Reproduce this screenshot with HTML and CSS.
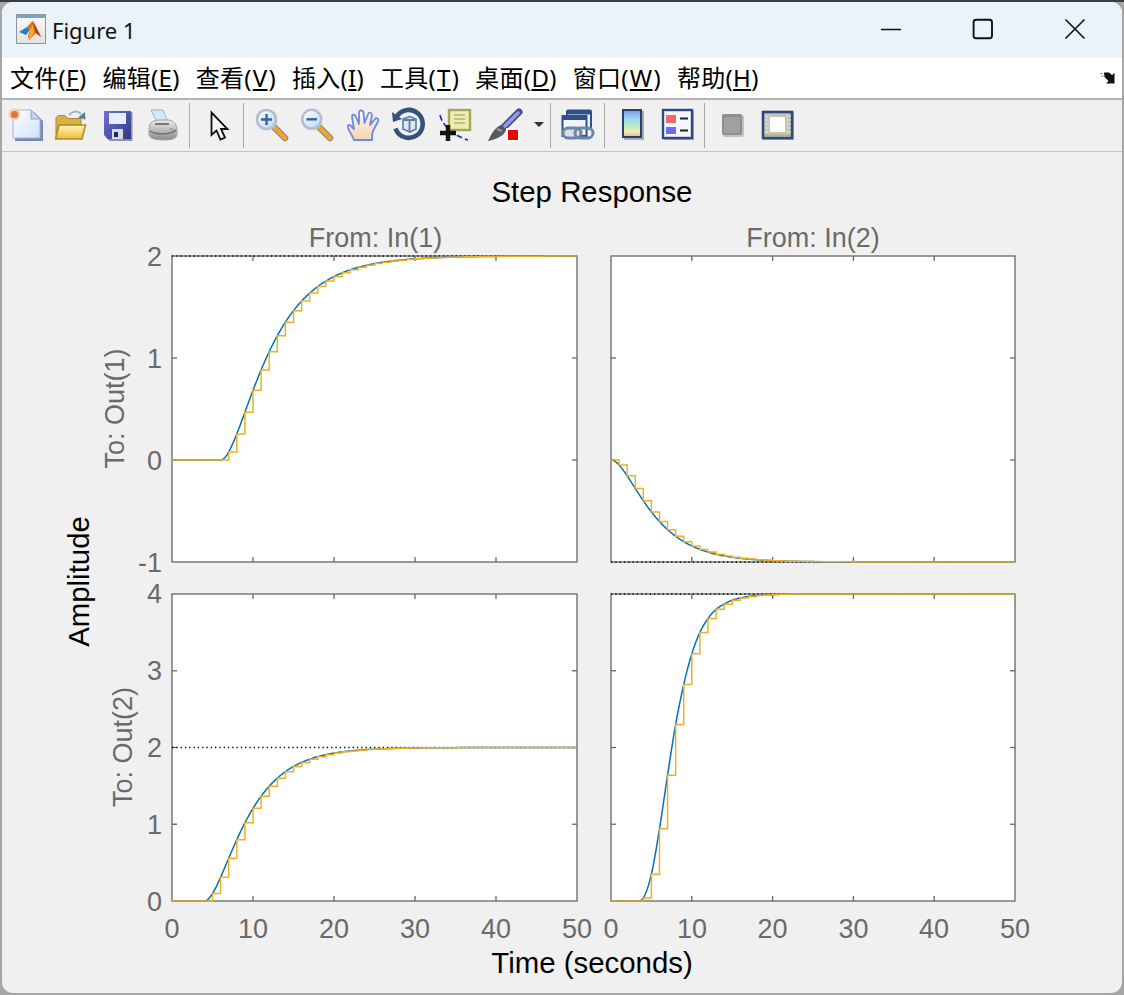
FILE: index.html
```html
<!DOCTYPE html>
<html lang="zh">
<head>
<meta charset="utf-8">
<title>Figure 1</title>
<link rel="stylesheet" href="styles.css">
</head>
<body>
<div class="window">
  <header class="titlebar">
    <svg class="app-icon" viewBox="0 0 30 30" width="30" height="30">
      <defs><linearGradient id="wb" x1="0" y1="0" x2="0" y2="1"><stop offset="0" stop-color="#fafafa"/><stop offset="1" stop-color="#e2e2e2"/></linearGradient></defs>
      <rect x="0.5" y="0.5" width="29" height="29" fill="url(#wb)" stroke="#8b959e"/>
      <rect x="1" y="1" width="28" height="3" fill="#76a3c6"/>
      <path d="M3 18 L11 13 L14 16 L10 21 Z" fill="#2f7fc0"/>
      <path d="M11 13 C13 11 15 8 17 7 L25 23 L20 19 L13 26 L12 22 L14 16 Z" fill="#e2701f"/>
      <path d="M17 7 L25 23 L20 19 L18 12 Z" fill="#b5341a"/>
      <path d="M14 16 L17 11 L18 19 L13 26 Z" fill="#f2b02a"/>
    </svg>
    <span class="title-text">Figure 1</span>
    <div class="win-controls">
      <button class="win-btn"><svg viewBox="0 0 24 24" width="24" height="24"><path d="M2 12.5H22" stroke="#111" stroke-width="1.6"/></svg></button>
      <button class="win-btn"><svg viewBox="0 0 24 24" width="24" height="24"><rect x="2.600" y="2.800" width="18.400" height="18.400" rx="2.500" fill="none" stroke="#111" stroke-width="1.900"/></svg></button>
      <button class="win-btn"><svg viewBox="0 0 24 24" width="24" height="24"><path d="M2.500 2.500L21.500 21.500M21.500 2.500L2.500 21.500" stroke="#111" stroke-width="1.600"/></svg></button>
    </div>
  </header>

  <nav class="menubar">
    <span class="menu-item">文件(<u>F</u>)</span>
    <span class="menu-item">编辑(<u>E</u>)</span>
    <span class="menu-item wide">查看(<u>V</u>)</span>
    <span class="menu-item">插入(<u>I</u>)</span>
    <span class="menu-item wide">工具(<u>T</u>)</span>
    <span class="menu-item">桌面(<u>D</u>)</span>
    <span class="menu-item wide">窗口(<u>W</u>)</span>
    <span class="menu-item">帮助(<u>H</u>)</span>
    <svg class="dock-arrow" viewBox="0 0 16 12" width="16" height="12">
      <path d="M2 .5H7L10 3L12.500 1V11.500H4L6.500 9L2.500 5Z" fill="#111" transform="translate(2 0)"/>
      <path d="M0 1.500H2.500M1 4H3.500" stroke="#888" stroke-width="1"/>
    </svg>
  </nav>

  <div class="toolbar">
    <div class="tb-group g1">
      <svg class="tool" viewBox="0 0 46 36">
        <defs>
          <linearGradient id="pg" x1="0" y1="0" x2="1" y2="1"><stop offset="0" stop-color="#ffffff"/><stop offset="1" stop-color="#cfe2f8"/></linearGradient>
          <linearGradient id="fg" x1="0" y1="0" x2="0" y2="1"><stop offset="0" stop-color="#fff6b0"/><stop offset="1" stop-color="#eebc3e"/></linearGradient>
          <linearGradient id="sv" x1="0" y1="0" x2="1" y2="1"><stop offset="0" stop-color="#6f72d8"/><stop offset="1" stop-color="#2f3a80"/></linearGradient>
          <linearGradient id="pr" x1="0" y1="0" x2="0" y2="1"><stop offset="0" stop-color="#ececec"/><stop offset="1" stop-color="#8a8a8a"/></linearGradient>
          <linearGradient id="hd" x1="0" y1="0" x2="0" y2="1"><stop offset="0" stop-color="#fff8f0"/><stop offset="1" stop-color="#f6d2b0"/></linearGradient>
          <linearGradient id="cb" x1="0" y1="0" x2="0" y2="1"><stop offset="0" stop-color="#7f8fea"/><stop offset=".35" stop-color="#9fdcec"/><stop offset=".6" stop-color="#c0eac0"/><stop offset=".82" stop-color="#f4e8b0"/><stop offset="1" stop-color="#f0b088"/></linearGradient>
          <linearGradient id="lens" x1="0" y1="0" x2="1" y2="1"><stop offset="0" stop-color="#ffffff"/><stop offset="1" stop-color="#b4dcef"/></linearGradient>
        </defs>
        <path d="M13 5H32L41 14V34H13Z" fill="#7d88ae"/>
        <path d="M11 3H29L38 12V31H11Z" fill="url(#pg)" stroke="#9ab4e0"/>
        <path d="M29 3L38 12H29Z" fill="#c4d4ee" stroke="#8ea6d0"/>
        <circle cx="12.500" cy="7.500" r="6" fill="#f6cdb0"/>
        <circle cx="12.500" cy="7.500" r="3.600" fill="#e8743c"/>
      </svg>
      <svg class="tool" viewBox="0 0 46 36">
        <path d="M8 31V11L10 8.500H17L20 11.500H33V18H12Z" fill="#d9ae44" stroke="#a98a2c"/>
        <path d="M7.500 32L11 18H37.500L34 32Z" fill="url(#fg)" stroke="#b08c24" stroke-width="1.600"/>
        <path d="M21 8C25 3.500 30 3.500 33 7" fill="none" stroke="#a4b6c6" stroke-width="2.200"/>
        <path d="M37 5L37.500 12.500L30 10.500Z" fill="#5b7ea2"/>
      </svg>
      <svg class="tool" viewBox="0 0 46 36">
        <path d="M10 4H37V33H14L10 29Z" fill="#8b93ae" transform="translate(1.500 1)"/>
        <path d="M10 4H37V32H14L10 28Z" fill="url(#sv)"/>
        <rect x="15" y="6" width="17" height="11" fill="#e6eefc"/>
        <rect x="18" y="22" width="11" height="10" fill="#d9d9e4"/>
        <rect x="20" y="25" width="4" height="5" fill="#222a55"/>
      </svg>
      <svg class="tool" viewBox="0 0 46 36">
        <path d="M11 3H23L28 15H17Z" fill="#cfe8fa" stroke="#9cb2c2"/>
        <path d="M9 22C9 15 14 13 20 13H28C33 13 37 17 37 23V27C37 31 33 33 24 33C14 33 9 31 9 27Z" fill="url(#pr)" stroke="#a0a0a0"/>
        <path d="M10 24C16 28 30 28 36 23" fill="none" stroke="#6c6c6c" stroke-width="1.500"/>
        <path d="M15 17H29" stroke="#777" stroke-width="2"/>
        <rect x="30" y="21" width="3" height="2" fill="#6fbe7a"/>
      </svg>
    </div>
    <div class="tb-group g2">
      <svg class="tool" viewBox="0 0 46 36">
        <path d="M14.500 5.500V28L19.500 23.500L23.500 32.500L28 30.500L24 22H30.500Z" fill="#f5f5f5" stroke="#111" stroke-width="1.800"/>
      </svg>
    </div>
    <div class="tb-group g3">
      <svg class="tool" viewBox="0 0 46 36">
        <path d="M27 20L38 31" stroke="#8d8268" stroke-width="6.500" stroke-linecap="round"/>
        <path d="M27 20L38 31" stroke="#eda53a" stroke-width="4.500" stroke-linecap="round"/>
        <circle cx="19.500" cy="12.500" r="9.500" fill="url(#lens)" stroke="#b6bed6" stroke-width="2.600"/>
        <path d="M14 12.500H25M19.500 7V18" stroke="#3a5fa6" stroke-width="2.400"/>
      </svg>
      <svg class="tool" viewBox="0 0 46 36">
        <path d="M26 20L37 31" stroke="#8d8268" stroke-width="6.500" stroke-linecap="round"/>
        <path d="M26 20L37 31" stroke="#eda53a" stroke-width="4.500" stroke-linecap="round"/>
        <circle cx="18.700" cy="12.300" r="9.500" fill="url(#lens)" stroke="#b6bed6" stroke-width="2.600"/>
        <path d="M13.500 12.300H24" stroke="#3a5fa6" stroke-width="2.400"/>
      </svg>
      <svg class="tool" viewBox="0 0 46 36">
        <path d="M15 33C13 28 11 26 9 21C8 18 10 17 12 19L15 22L13 10C13 7 16 7 17 10L20 17L20 6C20 2.500 24 2.500 24.500 6L25.500 16L29 7.500C30 4.500 33 5.500 33 8.500L31 18L36 12C38 10 40 12 39 14.500L34 24C33 27 33 30 33 33Z" fill="url(#hd)" stroke="#6a8ce0" stroke-width="1.800" stroke-linejoin="round"/>
      </svg>
      <svg class="tool" viewBox="0 0 46 36">
        <path d="M11 11A14 14 0 1 1 10.500 21.500" fill="none" stroke="#35527c" stroke-width="4.600"/>
        <path d="M7 5L8 15L17 12Z" fill="#35527c"/>
        <path d="M18 12L25 9.500L31 12V22L25 25L18 22Z" fill="#dfe7f0" stroke="#5a7aa2" stroke-width="1.600"/>
        <path d="M19 13H30M24.500 13V24" stroke="#5a7aa2" stroke-width="1.800"/>
      </svg>
      <svg class="tool" viewBox="0 0 46 36">
        <path d="M9 8C11 17 20 28 37 33" fill="none" stroke="#2222dd" stroke-width="1.600" stroke-dasharray="6 3"/>
        <rect x="18" y="3" width="21" height="20" fill="#eeecb0" stroke="#a8a45e" stroke-width="2.400"/>
        <path d="M23 8H34M23 12H34M23 16H34" stroke="#b4b178" stroke-width="1.600"/>
        <path d="M17 18V34M9 26H25" stroke="#111" stroke-width="4.400"/>
      </svg>
      <svg class="tool" viewBox="0 0 46 36">
        <path d="M27 20L42 5" stroke="#46518c" stroke-width="7" stroke-linecap="round"/>
        <path d="M28 19L41 6" stroke="#8f9ce6" stroke-width="3.500" stroke-linecap="round"/>
        <path d="M24 18L29 23C27 29 20 32 11 34C14 28 17 21 24 18Z" fill="#55585c"/>
        <path d="M20 22L25 24" stroke="#999" stroke-width="2"/>
        <rect x="29" y="21" width="14" height="14" fill="#fff"/>
        <rect x="31" y="23" width="10" height="10" fill="#f00000"/>
      </svg>
      <svg class="tool tool-small" viewBox="0 0 24 36"><path d="M11 15H21L16 20Z" fill="#333"/></svg>
    </div>
    <div class="tb-group g4">
      <svg class="tool" viewBox="0 0 46 36">
        <rect x="13" y="3.500" width="24" height="18" rx="1" fill="#eef2f8" stroke="#2f5088" stroke-width="2"/>
        <rect x="13" y="3.500" width="24" height="4" fill="#2f5088"/>
        <rect x="8.500" y="9" width="24" height="20" fill="#f2f5fa" stroke="#2f5088" stroke-width="2"/>
        <rect x="8.500" y="9" width="24" height="4" fill="#2f5088"/>
        <rect x="9" y="21" width="18" height="10" rx="5" fill="#d8e0ea" stroke="#6a86a8" stroke-width="3"/>
        <rect x="21" y="21" width="18" height="10" rx="5" fill="none" stroke="#6a86a8" stroke-width="3"/>
      </svg>
    </div>
    <div class="tb-group g5">
      <svg class="tool" viewBox="0 0 46 36">
        <rect x="15" y="4" width="20" height="29" fill="#a8aab8"/>
        <rect x="14" y="3" width="18" height="27" fill="url(#cb)" stroke="#2a3f70" stroke-width="2"/>
      </svg>
      <svg class="tool" viewBox="0 0 46 36">
        <rect x="9" y="4" width="30" height="29" fill="#a8aab8"/>
        <rect x="8" y="3" width="29" height="28" fill="#f4f6fb" stroke="#2a4a80" stroke-width="2.400"/>
        <rect x="11" y="8" width="10" height="8" fill="#ee6a6a"/>
        <rect x="11" y="20" width="10" height="7" fill="#6b6bee"/>
        <path d="M25 11.500H33M25 23.500H33" stroke="#222" stroke-width="2"/>
      </svg>
    </div>
    <div class="tb-group g6">
      <svg class="tool" viewBox="0 0 46 36">
        <rect x="13" y="8" width="21" height="22" rx="2" fill="#c2c2c2"/>
        <rect x="12" y="7" width="20" height="21" rx="2" fill="#8f8f8f"/>
        <rect x="14" y="10" width="16" height="16" fill="#a0a0a0"/>
      </svg>
      <svg class="tool" viewBox="0 0 46 36">
        <rect x="7" y="5" width="31" height="28" fill="#a8aab8"/>
        <rect x="7" y="5" width="29" height="26" fill="#c8c4b4" stroke="#2a4a80" stroke-width="2.600"/>
        <rect x="14" y="10" width="15" height="15" fill="#fff"/>
        <path d="M10 8V28M12 8V28M31.500 8V28M34 8V28" stroke="#e6e6e6" stroke-width="1" stroke-dasharray="2 2"/>
        <path d="M9 28.500H34" stroke="#b4ae94" stroke-width="2"/>
      </svg>
    </div>
  </div>

  <main class="figure">
    <svg id="plot" class="plot" viewBox="2 152 1120 841" width="1120" height="841">
      <g class="axes-bg">
        <rect x="172" y="256" width="405" height="306"/>
        <rect x="611" y="256" width="404" height="306"/>
        <rect x="172" y="594" width="405" height="307"/>
        <rect x="611" y="594" width="404" height="307"/>
      </g>
      <g id="layer"></g>
      <text class="title" x="592" y="202">Step Response</text>
      <text class="sub" x="375.500" y="247">From: In(1)</text>
      <text class="sub" x="813" y="247">From: In(2)</text>
      <text class="sub" transform="translate(124 408.500) rotate(-90)">To: Out(1)</text>
      <text class="sub" transform="translate(132 747) rotate(-90)">To: Out(2)</text>
      <text class="title" transform="translate(88.500 581.500) rotate(-90)">Amplitude</text>
      <text class="title" x="592" y="973">Time (seconds)</text>
      <g class="ylab">
        <text x="162" y="266">2</text><text x="162" y="368">1</text><text x="162" y="470">0</text><text x="162" y="572">-1</text>
        <text x="162" y="603">4</text><text x="162" y="680">3</text><text x="162" y="757">2</text><text x="162" y="834">1</text><text x="162" y="911">0</text>
      </g>
      <g class="xlab">
        <text x="172" y="938">0</text><text x="253" y="938">10</text><text x="334" y="938">20</text><text x="415" y="938">30</text><text x="496" y="938">40</text><text x="577" y="938">50</text>
        <text x="611" y="938">0</text><text x="692" y="938">10</text><text x="772.500" y="938">20</text><text x="853.500" y="938">30</text><text x="934" y="938">40</text><text x="1015" y="938">50</text>
      </g>
    </svg>
  </main>
</div>
<script src="charts.js"></script>
</body>
</html>
```
FILE: styles.css
```css
* { box-sizing: border-box; }
html, body { margin: 0; padding: 0; }
body {
  width: 1124px;
  height: 995px;
  overflow: hidden;
  background: #a6a6a6;
  border-top: 2px solid #3d3d3d;
  font-family: "Noto Sans", "Noto Sans CJK SC", sans-serif;
}
.window {
  margin: 0 2px;
  width: 1120px;
  height: 991px;
  background: #f0f0f0;
  border-radius: 11px;
  overflow: hidden;
  display: flex;
  flex-direction: column;
}
.titlebar {
  height: 56px;
  flex: none;
  background: #eaf3f9;
  display: flex;
  align-items: center;
  padding-bottom: 2px;
}
.app-icon { margin: 0 6px 0 14px; flex: none; }
.title-text { font-size: 22px; color: #111; padding-top: 2px; }
.win-controls { margin-left: auto; margin-right: 1px; display: flex; }
.win-btn {
  width: 92px;
  height: 54px;
  padding: 0;
  border: 0;
  background: none;
  display: flex;
  align-items: center;
  justify-content: center;
}
.menubar {
  height: 42px;
  flex: none;
  background: #fff;
  border-bottom: 2px solid #b4b4b4;
  display: flex;
  align-items: center;
  gap: 16px;
  padding-left: 8px;
  font-size: 24px;
  letter-spacing: 0.3px;
  color: #000;
  white-space: nowrap;
}
.menu-item { line-height: 40px; }
.wide u { padding: 0 1px; }
.dock-arrow { margin-left: auto; margin-right: 6px; }
.toolbar {
  height: 52px;
  flex: none;
  display: flex;
  background: #f0f0f0;
  border-bottom: 1.500px solid #c4c4c4;
  padding-top: 3px;
}
.tb-group {
  display: flex;
  height: 45px;
  border-right: 1px solid #a8a8a8;
  align-items: flex-start;
  padding-top: 4px;
}
.g1 { width: 188px; }
.g2 { width: 54px; padding-left: 7px; }
.g3 { width: 307px; padding-left: 3px; }
.g4 { width: 54px; padding-left: 3px; }
.g5 { width: 100px; padding-left: 4px; }
.g6 { border-right: 0; padding-left: 5px; }
.tool { width: 46px; height: 36px; flex: none; display: block; filter: blur(0.45px); }
.tool-small { width: 24px; }
.figure { flex: 1; min-height: 0; }
.plot { display: block; }
.axes-bg rect { fill: #fff; }
.axes-box { fill: none; stroke: #666; stroke-width: 1.300; }
.tick { stroke: #666; stroke-width: 1.300; }
.ref { stroke: #000; stroke-width: 1.300; stroke-dasharray: 1.300 3; fill: none; }
.cont { fill: none; stroke: #0072bd; stroke-width: 1.500; stroke-linejoin: round; }
.stair { fill: none; stroke: #edb120; stroke-width: 1.500; }
.plot text { font-family: "Liberation Sans", Arial, sans-serif; }
.title { font-size: 29.400px; fill: #000; text-anchor: middle; }
.sub { font-size: 27px; fill: #6a6a6a; text-anchor: middle; }
.ylab text { font-size: 27px; fill: #6a6a6a; text-anchor: end; }
.xlab text { font-size: 27px; fill: #6a6a6a; text-anchor: middle; }
```
FILE: charts.js
```js
(function () {
  var NS = 'http://www.w3.org/2000/svg';
  var layer = document.getElementById('layer');

  function el(tag, cls, attrs) {
    var n = document.createElementNS(NS, tag);
    n.setAttribute('class', cls);
    for (var k in attrs) n.setAttribute(k, attrs[k]);
    layer.appendChild(n);
    return n;
  }

  function twoPole(t1, t2) {
    return function (s) {
      if (s <= 0) return 0;
      return 1 - (t1 * Math.exp(-s / t1) - t2 * Math.exp(-s / t2)) / (t1 - t2);
    };
  }

  var table = [0, 0.01, 0.0875, 0.235, 0.41, 0.575, 0.705, 0.805, 0.875, 0.92, 0.95, 0.967, 0.98, 0.987, 0.992, 0.995, 0.997, 0.998, 0.999, 1];
  function tabulated(s) {
    if (s <= 0) return 0;
    if (s >= table.length - 1) return 1;
    var i = Math.floor(s), u = s - i;
    var a = table[Math.max(i - 1, 0)], b = table[i], c = table[i + 1], d = table[Math.min(i + 2, table.length - 1)];
    return 0.5 * (2 * b + (c - a) * u + (2 * a - 5 * b + 4 * c - d) * u * u + (3 * b - a - 3 * c + d) * u * u * u);
  }

  var plots = [
    { x0: 172, w: 405, top: 256, h: 306, ymax: 2, ymin: -1, ref: 2, gain: 2, delay: 6, f: twoPole(5, 2), yt: [2, 1, 0, -1] },
    { x0: 611, w: 404, top: 256, h: 306, ymax: 2, ymin: -1, ref: -1, gain: -1, delay: 0, f: twoPole(4, 2), yt: [2, 1, 0, -1] },
    { x0: 172, w: 405, top: 594, h: 307, ymax: 4, ymin: 0, ref: 2, gain: 2, delay: 4, f: twoPole(4, 2), yt: [4, 3, 2, 1, 0] },
    { x0: 611, w: 404, top: 594, h: 307, ymax: 4, ymin: 0, ref: 4, gain: 4, delay: 3, f: tabulated, yt: [4, 3, 2, 1, 0] }
  ];

  plots.forEach(function (p) {
    var X = function (t) { return p.x0 + t * p.w / 50; };
    var Y = function (v) { return p.top + (p.ymax - v) * p.h / (p.ymax - p.ymin); };
    var val = function (t) { return p.gain * p.f(t - p.delay); };

    el('rect', 'axes-box', { x: p.x0, y: p.top, width: p.w, height: p.h });
    for (var x = 10; x < 50; x += 10) {
      el('line', 'tick', { x1: X(x), x2: X(x), y1: p.top, y2: p.top + 5 });
      el('line', 'tick', { x1: X(x), x2: X(x), y1: p.top + p.h, y2: p.top + p.h - 5 });
    }
    p.yt.slice(1, -1).forEach(function (v) {
      el('line', 'tick', { x1: p.x0, x2: p.x0 + 5, y1: Y(v), y2: Y(v) });
      el('line', 'tick', { x1: p.x0 + p.w, x2: p.x0 + p.w - 5, y1: Y(v), y2: Y(v) });
    });

    el('line', 'ref', { x1: p.x0, x2: p.x0 + p.w, y1: Y(p.ref), y2: Y(p.ref) });

    var d = [];
    for (var t = 0; t <= 50.001; t += 0.1) d.push(X(t).toFixed(2) + ' ' + Y(val(t)).toFixed(2));
    el('path', 'cont', { d: 'M' + d.join('L') });

    var s = 'M' + X(0) + ' ' + Y(0).toFixed(2);
    for (var k = 1; k <= 50; k++) {
      s += 'H' + X(k).toFixed(2);
      if (k < 50) s += 'V' + Y(val(k)).toFixed(2);
    }
    el('path', 'stair', { d: s });
  });
})();
```
